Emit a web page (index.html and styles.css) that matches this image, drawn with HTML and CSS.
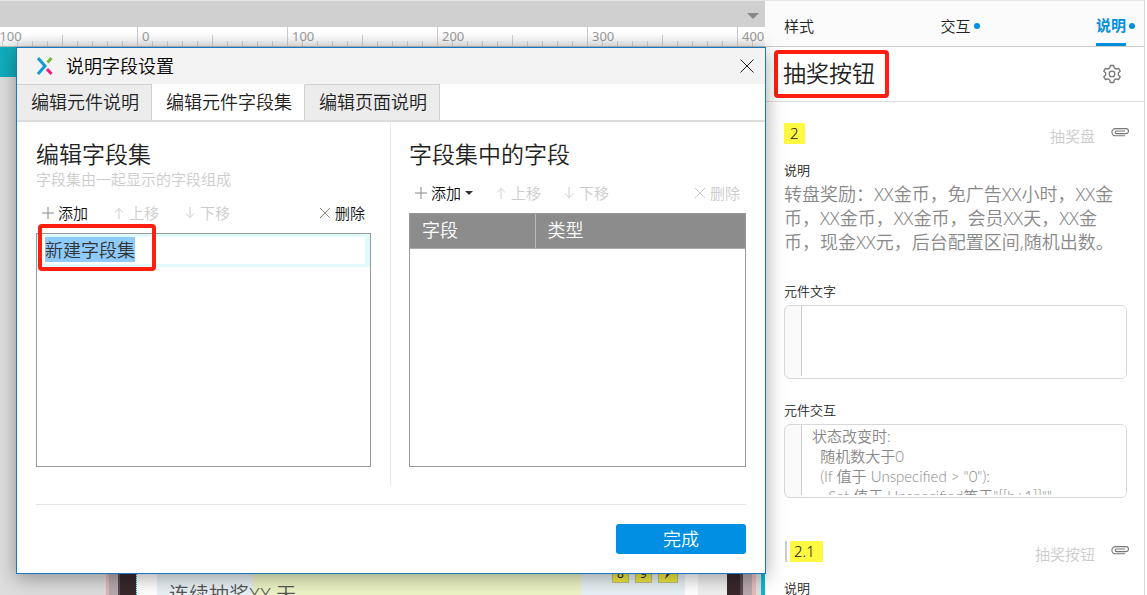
FILE: index.html
```html
<!DOCTYPE html>
<html lang="zh-CN">
<head>
<meta charset="utf-8">
<title>说明字段设置</title>
<link rel="stylesheet" href="styles.css">
</head>
<body>
<svg class="sprite" aria-hidden="true">
  <symbol id="plus" viewBox="0 0 12 12"><path d="M6 0v12M0 6h12"/></symbol>
  <symbol id="up" viewBox="0 0 12 12"><path d="M6 12V1.500M2 5.500L6 1.500l4 4"/></symbol>
  <symbol id="down" viewBox="0 0 12 12"><path d="M6 0v10.500M2 6.500l4 4 4-4"/></symbol>
  <symbol id="cross" viewBox="0 0 12 12"><path d="M1 1l10 10M11 1L1 11"/></symbol>
  <symbol id="clip" viewBox="0 0 18 9"><path d="M14 7.800H4.500a3.600 3.600 0 0 1 0-7.200H15a2.500 2.500 0 0 1 0 5H5.500a1.200 1.200 0 0 1 0-2.600H14"/></symbol>
</svg>
<div class="app">
  <main class="workspace">
    <div class="page-strip"><span class="caret caret-gray"></span></div>
    <div class="ruler">
      <span class="mark">−100</span><span class="mark">0</span><span class="mark">100</span><span class="mark">200</span><span class="mark">300</span><span class="mark">400</span>
    </div>
    <div class="stage">
      <div class="stage-bar"></div>
      <div class="device">
        <div class="edge edge-left"></div>
        <div class="screen">
          <div class="streak">
            <div class="streak-text">连续抽奖XX 天</div>
            <div class="badges"><span class="pin">8</span><span class="pin">9</span><span class="pin pin-wide"><svg viewBox="0 0 12 12"><path d="M3 1h8L8 5h2L3 12l2-6H1z"/></svg></span></div>
          </div>
        </div>
        <div class="edge edge-right"></div>
      </div>
    </div>
  </main>

  <aside class="inspector">
    <nav class="inspector-tabs">
      <button class="itab itab-first">样式</button>
      <button class="itab">交互<i class="dot"></i></button>
      <button class="itab itab-active"><span>说明</span><i class="dot"></i></button>
    </nav>
    <header class="inspector-title">
      <h1 class="marked">抽奖按钮</h1>
      <button class="icon-button" aria-label="设置">
        <svg class="gear" viewBox="0 0 20 20"><path d="M8.300 1h3.400l.5 2.500 1.900 1.100 2.400-.8 1.700 2.900-1.900 1.700v2.200l1.900 1.700-1.700 2.900-2.400-.8-1.900 1.100-.5 2.500H8.300l-.5-2.500-1.900-1.100-2.400.8-1.700-2.900 1.900-1.700V8.400L1.800 6.700l1.700-2.900 2.400.8 1.900-1.100z" transform="translate(0 .5)" stroke-linejoin="round"/><circle cx="10" cy="10" r="2.800"/></svg>
      </button>
    </header>
    <div class="notes">
      <div class="note-head">
        <span class="num">2</span>
        <span class="note-name">抽奖盘</span>
        <svg class="clip"><use href="#clip"/></svg>
      </div>
      <h3 class="label">说明</h3>
      <p class="desc">转盘奖励：XX金币，免广告XX小时，XX金币，XX金币，XX金币，会员XX天，XX金币，现金XX元，后台配置区间,随机出数。</p>
      <label class="label" for="text">元件文字</label>
      <div class="field"><textarea id="text" readonly></textarea></div>
      <label class="label" for="action">元件交互</label>
      <div class="field"><textarea id="action" readonly>状态改变时:
  随机数大于0
  (If 值于 Unspecified &gt; "0"):
    Set 值于 Unspecified等于"[[b+1]]""</textarea></div>
      <div class="note-head">
        <span class="num num-child">2.1</span>
        <span class="note-name">抽奖按钮</span>
        <svg class="clip"><use href="#clip"/></svg>
      </div>
      <h3 class="label">说明</h3>
    </div>
  </aside>

  <section class="dialog" role="dialog" aria-labelledby="dialog-title">
    <header class="titlebar">
      <svg class="logo" viewBox="0 0 16 18"><path d="M1 1l7 8-7 8" stroke="#139ad6"/><path d="M10.500 5.500L14.500 1" stroke="#74b943"/><path d="M10 12l4.500 5" stroke="#ec1c7c"/></svg>
      <h2 class="dialog-title" id="dialog-title">说明字段设置</h2>
      <button class="close" aria-label="关闭"><svg viewBox="0 0 14 14"><path d="M.5.5l13 13M13.500.5l-13 13"/></svg></button>
    </header>
    <div class="tabs" role="tablist">
      <button class="tab" role="tab">编辑元件说明</button>
      <button class="tab tab-active" role="tab" aria-selected="true">编辑元件字段集</button>
      <button class="tab" role="tab">编辑页面说明</button>
    </div>
    <div class="columns">
      <div class="column">
        <h2 class="heading">编辑字段集</h2>
        <p class="hint">字段集由一起显示的字段组成</p>
        <div class="toolbar">
          <button class="tool"><svg><use href="#plus"/></svg>添加</button>
          <button class="tool" disabled><svg><use href="#up"/></svg>上移</button>
          <button class="tool" disabled><svg><use href="#down"/></svg>下移</button>
          <button class="tool tool-end"><svg><use href="#cross"/></svg>删除</button>
        </div>
        <div class="list">
          <div class="list-row"><input class="name" id="set-name" aria-label="字段集名称" value="新建字段集"></div>
          <div class="highlight-box"></div>
        </div>
      </div>
      <div class="column column-right">
        <h2 class="heading">字段集中的字段</h2>
        <div class="toolbar toolbar-tight">
          <button class="tool"><svg><use href="#plus"/></svg>添加<span class="caret"></span></button>
          <button class="tool" disabled><svg><use href="#up"/></svg>上移</button>
          <button class="tool" disabled><svg><use href="#down"/></svg>下移</button>
          <button class="tool tool-end" disabled><svg><use href="#cross"/></svg>删除</button>
        </div>
        <div class="list">
          <table class="fields"><thead><tr><th class="col-name">字段</th><th>类型</th></tr></thead></table>
        </div>
      </div>
    </div>
    <footer class="dialog-foot"><button class="done">完成</button></footer>
  </section>
</div>
<script src="main.js"></script>
</body>
</html>
```
FILE: styles.css
```css
* { box-sizing: border-box; }
body {
  margin: 0;
  font: 15px/20px "Noto Sans", "Noto Sans CJK SC", sans-serif;
  font-weight: 350;
  color: #222;
  overflow: hidden;
}
h1, h2, h3, p { margin: 0; font-weight: 350; }
button {
  margin: 0;
  padding: 0;
  border: 0;
  background: none;
  font: inherit;
  color: inherit;
}
svg { fill: none; stroke: currentColor; flex: none; }
.sprite { position: absolute; width: 0; height: 0; }

.app {
  position: relative;
  display: grid;
  grid-template-columns: minmax(0, 1fr) 382px;
  height: 100vh;
  overflow: hidden;
}

/* Canvas */
.workspace {
  display: flex;
  flex-direction: column;
  min-width: 0;
  overflow: hidden;
  background: #ddd;
}
.page-strip {
  display: flex;
  justify-content: flex-end;
  align-items: center;
  height: 27px;
  padding: 4px 6px 0 0;
  border-top: 1px solid #e6e6e6;
  background: #d0d0d0;
}
.caret {
  border: 4px solid transparent;
  border-top-color: #333;
  border-bottom: 0;
}
.caret-gray { border-width: 6px; border-bottom: 0; border-top-color: #888; }
.ruler {
  display: flex;
  flex: none;
  height: 20px;
  margin-left: -13px;
  background: linear-gradient(#fff 40%, #ececec);
  border-bottom: 1px solid #bbb;
}
.mark {
  flex: none;
  width: 150px;
  padding-left: 4px;
  border-left: 1px solid #ccc;
  font-size: 13px;
  line-height: 18px;
  font-weight: 400;
  color: #999;
  background:
    linear-gradient(#ccc, #ccc) 74px 100% / 1px 11px no-repeat,
    repeating-linear-gradient(90deg, transparent 0 14px, #ccc 14px 15px) 0 100% / 100% 5px no-repeat;
}
.stage { display: flex; flex-direction: column; flex: 1; justify-content: space-between; }
.stage-bar { height: 30px; background: #10acbc; }
.device { display: flex; height: 40px; padding-left: 106px; border-right: 4px solid #10b4c8; }
.edge { flex: none; }
.edge-left { width: 30px; background: linear-gradient(90deg, #dcb8b8 0 3px, #b6a8ae 3px 12px, #5a4a50 12px 14px, #38282c 14px); }
.edge-right { width: 34px; background: linear-gradient(90deg, #38282c 0 13px, #5a4a50 13px 16px, #b6a8ae 16px 25px, #e4bcb8 25px 29px, #ddd 29px); }
.screen { flex: 1; padding: 0 42px 0 20px; background: linear-gradient(90deg, #fff calc(100% - 29px), #f0f0f0 calc(100% - 29px)); border-left: 1px dotted #10acbc; }
.streak {
  display: flex;
  justify-content: space-between;
  height: 40px;
  padding: 0 7px 0 12px;
  background: linear-gradient(90deg, #e8f1f5 0 96px, #edf4c6 96px calc(100% - 104px), #e8f1f5 calc(100% - 104px));
}
.streak-text { padding-top: 28px; font-size: 20px; line-height: 24px; color: #555; }
.badges { display: flex; gap: 6px; }
.pin {
  width: 17px;
  height: 28px;
  padding-top: 10px;
  border: 1px solid #bfbf80;
  background: #f0e840;
  font-size: 12px;
  line-height: 16px;
  font-weight: 400;
  text-align: center;
}
.pin-wide { width: 20px; }
.pin svg { width: 12px; height: 14px; fill: #333; stroke: none; }

/* Inspector */
.inspector {
  min-width: 0;
  margin-right: 2px;
  background: #fff;
  border-top: 1px solid #e6e6e6;
  border-right: 1px solid #d8d8d8;
  overflow: hidden;
}
.inspector-tabs {
  display: flex;
  justify-content: space-between;
  height: 46px;
  padding: 4px 9px 0 19px;
  background: #fbfbfb;
  border-bottom: 1px solid #ccc;
}
.itab { display: flex; align-items: center; gap: 3px; }
.itab-first { padding-right: 10px; }
.itab-active { color: #008fe0; font-weight: 700; }
.itab-active span { height: 41px; line-height: 40px; border-bottom: 3px solid #008fe0; }
.dot { width: 6px; height: 6px; border-radius: 3px; background: #008fe0; }
.inspector-title {
  display: flex;
  align-items: center;
  justify-content: space-between;
  height: 55px;
  padding: 0 22px 0 9px;
  border-bottom: 1px solid #ddd;
}
.marked {
  padding: 4px 10px 6px 5px;
  border: 4px solid #ff1e10;
  border-radius: 4px;
  font-size: 23px;
  line-height: 30px;
}
.icon-button { display: flex; color: #777; }
.gear { width: 20px; height: 20px; stroke-width: 1.3; }
.notes { padding: 21px 17px 0 19px; }
.note-head { display: flex; align-items: flex-start; height: 35px; }
.num {
  margin-right: auto;
  padding: 0 6px 1px;
  background: #fff942;
  color: #111;
}
.num-child { padding: 0 8px 1px 4px; margin-left: 6px; box-shadow: -3px 0 #fff, -5px 0 #ccc; }
.note-name { padding-top: 3px; color: #ccc; }
.clip { width: 18px; height: 9px; margin: 5px -2px 0 16px; color: #777; stroke-width: 1.1; }
.label { display: block; font-size: 13px; line-height: 24px; }
.desc { margin-bottom: 25px; font-size: 18px; line-height: 24px; color: #888; }
.field {
  height: 74px;
  margin: 2px 0 19px;
  padding-left: 16px;
  border: 1px solid #d8d8d8;
  border-radius: 6px;
  background: #fafafa;
  overflow: hidden;
}
.field + .note-head { margin-top: 43px; }
textarea {
  display: block;
  width: 100%;
  height: 70px;
  padding: 1px 10px 0;
  border: 0;
  border-left: 1px solid #ccc;
  outline: 0;
  resize: none;
  overflow: hidden;
  background: #fff;
  box-shadow: 0 4px #fff;
  font: 350 15px/20px Lato, "Noto Sans CJK SC", sans-serif;
  color: #888;
  white-space: pre;
}

/* Dialog */
.dialog {
  position: absolute;
  top: 47px;
  left: 16px;
  right: 381px;
  background: #fff;
  border: 1px solid #1a76c0;
  box-shadow: 0 4px 18px rgba(0, 0, 0, .35);
}
.titlebar {
  display: flex;
  align-items: center;
  height: 36px;
  padding: 0 11px 0 20px;
  background: #f3f3f3;
}
.logo { width: 16px; height: 18px; margin-right: 13px; stroke-width: 3; }
.dialog-title { font-size: 18px; line-height: 26px; color: #000; }
.close { display: flex; margin-left: auto; color: #222; }
.close svg { width: 14px; height: 14px; }
.tabs { display: flex; height: 38px; border-bottom: 2px solid #dcdcdc; }
.tab {
  padding: 0 12px 2px 14px;
  border-top: 1px solid #d0d0d0;
  border-right: 1px solid #d0d0d0;
  background: #ececec;
  font-size: 18px;
}
.tab-active { background: #fff; border-top-color: #fff; }
.columns {
  display: grid;
  grid-template-columns: 354fr 356fr;
  margin: 0 19px;
}
.column { display: flex; flex-direction: column; padding: 17px 19px 18px 0; }
.column-right { padding-left: 18px; padding-right: 0; border-left: 1px solid #e8e8e8; }
.heading { font-size: 23px; line-height: 30px; }
.hint { font-size: 15px; line-height: 20px; color: #ccc; }
.toolbar { display: flex; gap: 25px; height: 44px; padding: 4px 6px 0; }
.toolbar-tight { gap: 22px; }
.tool { display: flex; align-items: center; gap: 4px; color: #111; }
.tool svg { width: 12px; height: 12px; color: #888; }
.tool:disabled, .tool:disabled svg { color: #ccc; }
.tool-end { margin-left: auto; }
.list { position: relative; flex: 1; min-height: 234px; border: 1px solid #999; }
.list-row { padding: 3px 5px; background: #e0f9fb; }
.name {
  display: block;
  width: 100%;
  height: 27px;
  padding: 0 3px 3px;
  border: 0;
  outline: 0;
  background: #fff;
  font: inherit;
  font-size: 18px;
  color: #333;
}
.name::selection { background: #8ecbfa; color: #333; }
.highlight-box {
  position: absolute;
  top: -10px;
  left: 1px;
  width: 118px;
  height: 47px;
  border: 4px solid #ff1e10;
  border-radius: 4px;
}
.fields { width: 100%; border-collapse: collapse; background: #8c8c8c; color: #fff; }
.fields th { height: 34px; padding: 0 12px 1px; font-size: 18px; font-weight: 350; text-align: left; border-bottom: 1px solid #aaa; }
.fields .col-name { width: 125px; border-right: 1px solid #bbb; }
.dialog-foot {
  display: flex;
  justify-content: flex-end;
  margin: 19px 19px 0;
  padding: 19px 0;
  border-top: 1px solid #e4e4e4;
}
.done {
  width: 130px;
  height: 30px;
  border-radius: 3px;
  background: #008fe3;
  color: #fff;
  font-size: 18px;
}
```
FILE: main.js
```js
const nameInput = document.getElementById("set-name");
nameInput.focus();
nameInput.select();
```
